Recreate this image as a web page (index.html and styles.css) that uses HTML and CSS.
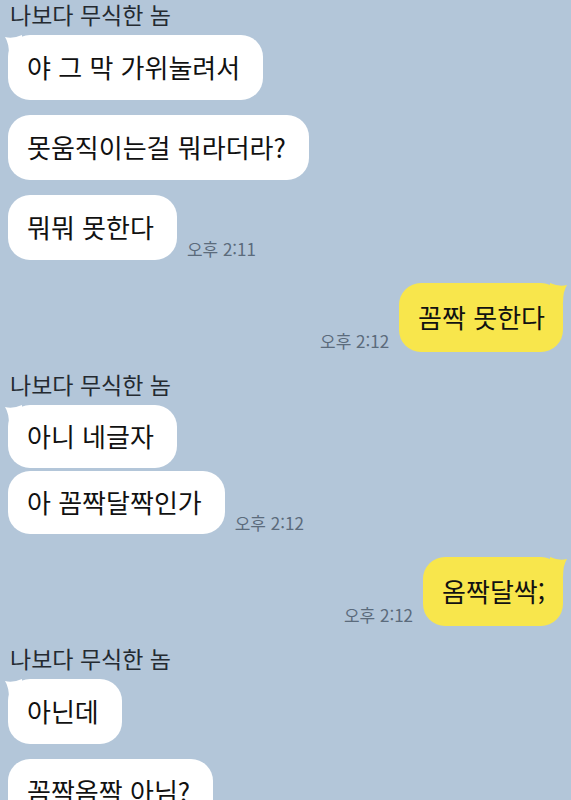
FILE: index.html
```html
<!DOCTYPE html>
<html lang="ko">
<head>
  <meta charset="UTF-8">
  <meta name="viewport" content="width=device-width, initial-scale=1.0">
  <title>채팅</title>
  <link rel="stylesheet" href="styles.css">
</head>
<body>
<main class="chat">
  <!-- 상대방 -->
  <section class="group">
    <div class="name">나보다 무식한 놈</div>
    <div class="bubbles">
      <div class="row"><div class="bubble first">야 그 막 가위눌려서</div></div>
      <div class="row"><div class="bubble">못움직이는걸 뭐라더라?</div></div>
      <div class="row"><div class="bubble">뭐뭐 못한다</div><span class="time">오후 2:11</span></div>
    </div>
  </section>

  <!-- 나 -->
  <section class="group mine">
    <div class="row"><span class="time">오후 2:12</span><div class="bubble first">꼼짝 못한다</div></div>
  </section>

  <section class="group">
    <div class="name">나보다 무식한 놈</div>
    <div class="bubbles tight">
      <div class="row"><div class="bubble first">아니 네글자</div></div>
      <div class="row"><div class="bubble">아 꼼짝달짝인가</div><span class="time">오후 2:12</span></div>
    </div>
  </section>

  <section class="group mine">
    <div class="row"><span class="time">오후 2:12</span><div class="bubble first">옴짝달싹;</div></div>
  </section>

  <section class="group">
    <div class="name">나보다 무식한 놈</div>
    <div class="bubbles">
      <div class="row"><div class="bubble first">아닌데</div></div>
      <div class="row"><div class="bubble">꼼짝옴짝 아님?</div></div>
    </div>
  </section>
</main>
</body>
</html>
```

FILE: styles.css
```css
:root {
  --bg: #b3c6d9;
  --mine: #f8e64c;
  --text: #111;
  --name: #242a31;
  --time: #5b6b7c;
}

* {
  margin: 0;
  padding: 0;
  box-sizing: border-box;
}

body {
  background-color: var(--bg);
  font-family: "Noto Sans CJK KR", "Noto Sans", sans-serif;
  color: var(--text);
  overflow: hidden;
}

.chat {
  display: flex;
  flex-direction: column;
  gap: 18px;
  padding: 0 8px;
}

.group {
  display: flex;
  flex-direction: column;
  gap: 7px;
}

.group.mine {
  margin-top: 5px;
}

.name {
  font-size: 23px;
  line-height: 28px;
  color: var(--name);
  padding-left: 2px;
}

.bubbles {
  display: flex;
  flex-direction: column;
  gap: 15px;
}

.bubbles.tight {
  gap: 3px;
}

.row {
  display: flex;
  align-items: flex-end;
  gap: 10px;
}

.mine .row {
  justify-content: flex-end;
}

.bubble {
  position: relative;
  background-color: white;
  border-radius: 22px;
  padding: 16px 23px 17px 19px;
  font-size: 26px;
  line-height: 32px;
}

.tight .bubble {
  padding-top: 15px;
  padding-bottom: 16px;
}

.mine .bubble {
  background-color: var(--mine);
  padding: 18px 18px 19px 19px;
}

/* 말풍선 꼬리 */
.bubble.first::before {
  content: "";
  position: absolute;
  top: 0;
  left: -3px;
  width: 17px;
  height: 20px;
  background-color: inherit;
  clip-path: path('M0 2 Q 8 4 17 0 L17 20 L4 20 Q 4 8 0 2 Z');
}

.mine .bubble.first::before {
  left: auto;
  right: -4px;
  clip-path: path('M17 2 Q 9 4 0 0 L0 20 L13 20 Q 13 8 17 2 Z');
}

.time {
  font-size: 17px;
  line-height: 20px;
  color: var(--time);
  white-space: nowrap;
  padding-bottom: 1px;
}
```
